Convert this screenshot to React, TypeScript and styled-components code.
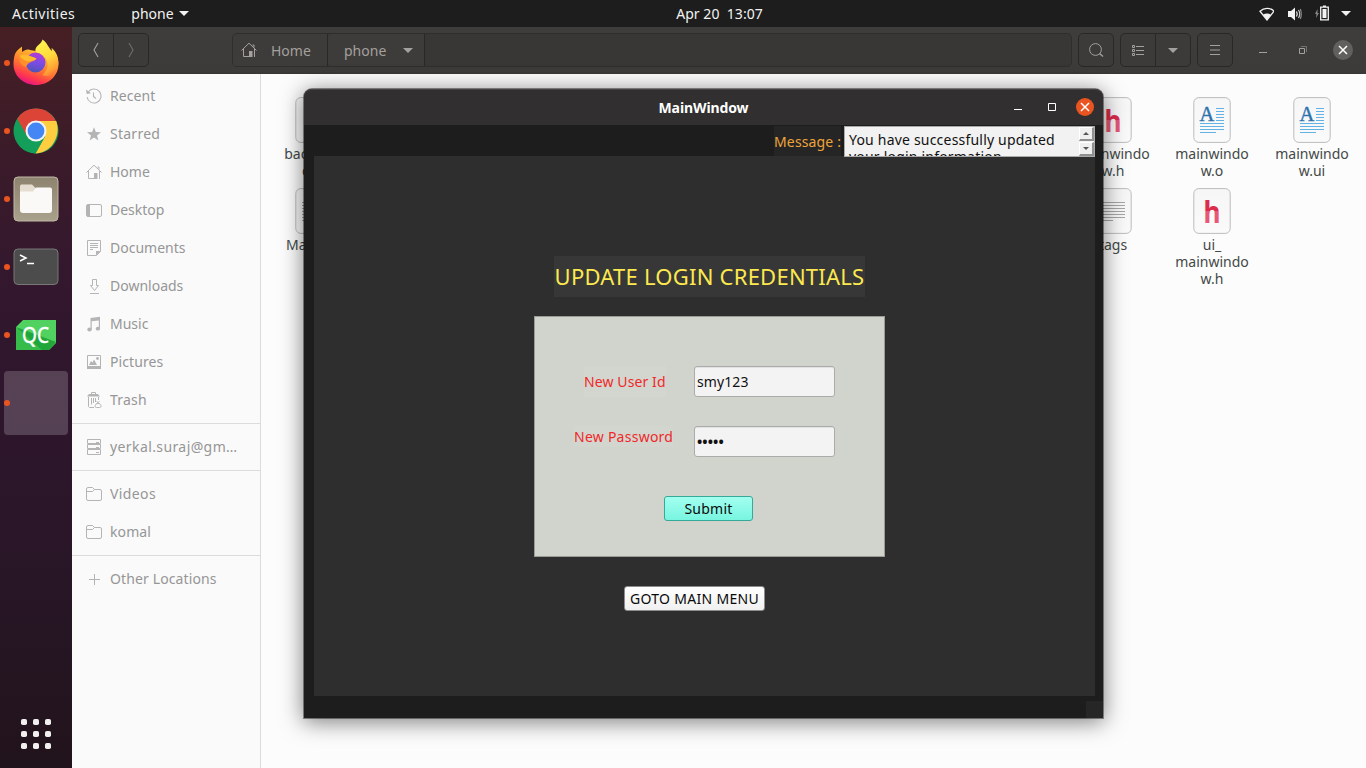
import React from "react";
import styled, { createGlobalStyle } from "styled-components";

const GlobalStyle = createGlobalStyle`
  * { box-sizing: border-box; }
  body {
    margin: 0;
    overflow: hidden;
    font-family: "Noto Sans", "Open Sans", sans-serif;
    font-size: 14px;
  }
  svg { display: block; flex: none; }
`;

const Desktop = styled.div`
  position: relative;
  width: 1366px;
  height: 768px;
  display: flex;
  flex-direction: column;
  overflow: hidden;
  background: #fcfcfc;
`;

const Text = styled.span<{ $track?: number }>`
  white-space: pre;
  letter-spacing: ${(p) => p.$track ?? 0}px;
`;

/* ---------- top bar ---------- */

const TopBar = styled.header`
  height: 27px;
  flex: none;
  display: grid;
  grid-template-columns: 1fr auto 1fr;
  align-items: center;
  background: #1d1d1d;
  color: #f2f2f2;
  line-height: 26px;
`;
const TopLeft = styled.div`
  display: flex;
  align-items: center;
  padding-left: 12px;
  gap: 56px;
`;
const AppMenu = styled.div`
  display: flex;
  align-items: center;
  gap: 5px;
`;
const Clock = styled.div`
  padding-left: 73px;
`;
const Tray = styled.div`
  display: flex;
  align-items: center;
  justify-content: flex-end;
  gap: 12px;
  padding-right: 15px;
`;

/* ---------- dock ---------- */

const Body = styled.div`
  flex: 1;
  display: flex;
  min-height: 0;
`;
const Dock = styled.nav`
  width: 72px;
  flex: none;
  display: flex;
  flex-direction: column;
  gap: 4px;
  padding: 4px 4px 2px;
  background: linear-gradient(#461f24 0%, #3b1b29 17%, #32172e 36%, #2d162c 55%, #251522 85%, #21131b 100%);
`;
const DockItem = styled.div<{ $active?: boolean }>`
  position: relative;
  width: 64px;
  height: 64px;
  display: flex;
  align-items: center;
  justify-content: center;
  border-radius: 4px;
  background: ${(p) => (p.$active ? "rgba(255,255,255,0.19)" : "transparent")};
`;
const RunningDot = styled.i`
  position: absolute;
  left: 0;
  top: 29px;
  width: 6px;
  height: 6px;
  border-radius: 50%;
  background: #e95420;
`;
const AppsGrid = styled.div`
  margin: auto auto 17px;
  display: grid;
  grid-template-columns: repeat(3, 6px);
  grid-auto-rows: 6px;
  gap: 6px;
`;
const AppsDot = styled.i`
  border-radius: 1.8px;
  background: #f2f0ef;
`;

/* ---------- file manager ---------- */

const FilesWindow = styled.main`
  flex: 1;
  display: flex;
  flex-direction: column;
`;
const HeaderBar = styled.div`
  height: 47px;
  flex: none;
  display: flex;
  align-items: center;
  gap: 6px;
  padding: 0 13px 1px 6px;
  background: linear-gradient(#3f3d3b, #3d3b39 95%, #383635);
  color: #a3a09d;
`;
const ButtonGroup = styled.div<{ $gap?: number }>`
  height: 34px;
  display: flex;
  margin-right: ${(p) => p.$gap ?? 0}px;
  border: 1px solid #292826;
  border-radius: 5px;
  background: #3d3b39;
`;
const HeaderButton = styled.div<{ $divided?: boolean }>`
  width: ${(p) => (p.$divided ? 35 : 34)}px;
  display: flex;
  align-items: center;
  justify-content: center;
  border-right: ${(p) => (p.$divided ? "1px solid #292826" : "0")};
`;
const PathBar = styled.div`
  flex: 1;
  height: 34px;
  display: flex;
  border: 1px solid #302e2d;
  border-radius: 5px;
  background: #393735;
`;
const PathSegment = styled.div<{ $width: number; $gap: number; $pad: number }>`
  width: ${(p) => p.$width}px;
  display: flex;
  align-items: center;
  gap: ${(p) => p.$gap}px;
  padding-left: ${(p) => p.$pad}px;
  border-right: 1px solid #292826;
  background: #3e3c3a;
  border-radius: 4px 0 0 4px;
`;
const WindowControls = styled.div`
  display: flex;
  align-items: center;
  gap: 20px;
  margin-left: 14px;
`;
const ControlSlot = styled.div`
  width: 20px;
  height: 20px;
  display: flex;
  align-items: center;
  justify-content: center;
`;
const RoundClose = styled(ControlSlot)<{ $color: string; $size: number }>`
  width: ${(p) => p.$size}px;
  height: ${(p) => p.$size}px;
  border-radius: 50%;
  background: ${(p) => p.$color};
`;
const FilesBody = styled.div`
  flex: 1;
  display: flex;
`;
const Sidebar = styled.aside`
  width: 189px;
  flex: none;
  padding-top: 3px;
  background: #fafafa;
  border-right: 1px solid #dcdcdc;
`;
const Place = styled.div`
  height: 38px;
  display: flex;
  align-items: center;
  gap: 8px;
  padding: 0 0 2px 14px;
  color: #969696;
  svg { margin-top: 2px; }
`;
const Separator = styled.div`
  height: 1px;
  margin: 4px 0;
  background: #dcdcdc;
`;
const FileGrid = styled.section`
  display: grid;
  grid-template-columns: 100px 99px repeat(6, 100px) 99px 100px 100px;
  grid-template-rows: 91px 110px;
  align-content: start;
  padding: 23px 0 0 3px;
`;
const FileCell = styled.div<{ $col: number; $row: number }>`
  grid-column: ${(p) => p.$col};
  grid-row: ${(p) => p.$row};
  width: 100px;
  display: flex;
  flex-direction: column;
  align-items: center;
`;
const FileName = styled.div`
  margin-top: 2px;
  line-height: 17px;
  text-align: center;
  white-space: pre;
  color: #444948;
`;

/* ---------- application window ---------- */

const AppWindow = styled.section`
  position: absolute;
  left: 304px;
  top: 89px;
  width: 799px;
  height: 629px;
  display: flex;
  flex-direction: column;
  border-radius: 8px 8px 0 0;
  background: #1d1d1d;
  box-shadow: 0 0 0 1px rgba(0, 0, 0, 0.4), 0 3px 22px 1px rgba(0, 0, 0, 0.5);
`;
const TitleBar = styled.div`
  height: 36px;
  flex: none;
  display: grid;
  grid-template-columns: 1fr auto 1fr;
  align-items: center;
  border-radius: 8px 8px 0 0;
  border-top: 1px solid #464444;
  padding-bottom: 1px;
  background: #322f30;
  color: #fff;
  font-weight: 700;
`;
const TitleControls = styled.div`
  grid-column: 3;
  display: flex;
  align-items: center;
  justify-content: flex-end;
  gap: 14px;
  padding-right: 9px;
`;
const TitleText = styled.div`
  grid-column: 2;
`;
const MessageRow = styled.div`
  height: 31px;
  flex: none;
  display: flex;
  justify-content: flex-end;
  gap: 3px;
  padding: 1px 8px 0 0;
`;
const MessageLabel = styled.label`
  width: 67px;
  line-height: 32px;
  height: 30px;
  background: #252525;
  color: #efa43a;
`;
const MessageBox = styled.div`
  width: 251px;
  height: 31px;
  position: relative;
  display: flex;
  justify-content: space-between;
  overflow: hidden;
  border: 1px solid #aaa;
  background: #f2f2f2;
  color: #111;
`;
const MessageText = styled.div`
  padding: 4px 0 0 4px;
  line-height: 17px;
`;
const ScrollButtons = styled.div`
  width: 15px;
  display: flex;
  flex-direction: column;
  gap: 1px;
`;
const ScrollButton = styled.div`
  height: 14px;
  display: flex;
  align-items: center;
  justify-content: center;
  background: #efefef;
  border: 1px solid #fff;
  border-right: 2px solid #909090;
  border-bottom: 2px solid #909090;
`;
const Canvas = styled.div`
  height: 540px;
  flex: none;
  margin: 0 8px 0 10px;
  padding-top: 100px;
  display: flex;
  flex-direction: column;
  align-items: flex-start;
  background: #2e2e2e;
`;
const Heading = styled.h1`
  width: 311px;
  height: 41px;
  margin: 0 0 19px 240px;
  font-size: 22px;
  font-weight: 400;
  line-height: 40px;
  text-align: center;
  background: #373737;
  color: #fce94f;
`;
const FormPanel = styled.form`
  width: 351px;
  height: 241px;
  margin-left: 220px;
  padding-top: 49px;
  border: 1px solid #9a9c96;
  background: #d1d4cc;
`;
const FieldRow = styled.div<{ $indent: number }>`
  display: flex;
  align-items: flex-start;
  justify-content: space-between;
  height: 31px;
  margin: 0 49px 29px ${(p) => p.$indent}px;
`;
const FieldLabel = styled.label<{ $height: number }>`
  height: ${(p) => p.$height}px;
  line-height: ${(p) => p.$height}px;
  background: #d3d5cf;
  color: #ef2929;
`;
const Field = styled.div<{ $masked?: boolean }>`
  width: 141px;
  height: 31px;
  padding-left: 2px;
  line-height: 30px;
  font-weight: ${(p) => (p.$masked ? 700 : 400)};
  border: 1px solid #abaca9;
  border-radius: 3px;
  background: #f3f3f3;
  box-shadow: inset 0 1px 0 #e2e2e2;
  color: #111;
`;
const PushButton = styled.button<{ $mint?: boolean; $width: number }>`
  display: block;
  width: ${(p) => p.$width}px;
  height: 25px;
  padding: 0;
  font: inherit;
  line-height: 23px;
  color: #0a0a0a;
  border: 1px solid ${(p) => (p.$mint ? "#36aa98" : "#8d8d8d")};
  border-radius: 3px;
  background: ${(p) =>
    p.$mint ? "linear-gradient(#a3fff0, #78f5e0)" : "linear-gradient(#fff, #f0f0f0)"};
`;
const SubmitRow = styled.div`
  margin: 39px 0 0 129px;
`;
const MenuRow = styled.div`
  margin: 29px 0 0 310px;
`;
const SizeGrip = styled.div`
  width: 17px;
  height: 17px;
  margin: 5px 0 0 auto;
  background: #262626;
`;

/* ---------- icons ---------- */

const Caret = ({ color, w = 10 }: { color: string; w?: number }) => (
  <svg width={w} height={w / 2} viewBox="0 0 10 5">
    <path d="M0 0h10L5 5z" fill={color} />
  </svg>
);

const HomeIcon = ({ color }: { color: string }) => (
  <svg width="16" height="16" viewBox="0 0 16 16" fill="none" stroke={color}>
    <path d="M.5 8.500 8 1.200l7.500 7.300M2.500 7v7.500H9M13.500 7v8M11.500 3h1.500v2.500" />
    <path d="M8 9h3.500v6H8z" fill={color} stroke="none" />
  </svg>
);

const FolderIcon = () => (
  <svg width="16" height="16" viewBox="0 0 16 16" fill="none" stroke="#b4b4b4">
    <path d="M.5 13v-10A1.500 1.500 0 0 1 2 1.500h4.500l2 2H14A1.500 1.500 0 0 1 15.500 5v8a1.500 1.500 0 0 1-1.500 1.500H2A1.500 1.500 0 0 1 .5 13zM.5 5.500h6l2-2" />
  </svg>
);

const placeIcons: Record<string, React.ReactNode> = {
  Recent: (
    <svg width="16" height="16" viewBox="0 0 16 16" fill="none" stroke="#b4b4b4" strokeWidth="1.100">
      <path d="M2.300 4a7 7 0 1 1-1.200 5M7.500 4.500v4l2.500 2" />
      <path d="M0 1.500 .7 6l4.300-.7z" fill="#b4b4b4" stroke="none" />
    </svg>
  ),
  Starred: (
    <svg width="16" height="16" viewBox="0 0 16 16">
      <path d="m8 1.300 1.800 4.700 5.200.2-4 3.200 1.400 5L8 11.600l-4.400 2.800 1.400-5-4-3.200 5.200-.2z" fill="#b4b4b4" />
    </svg>
  ),
  Home: <HomeIcon color="#b4b4b4" />,
  Desktop: (
    <svg width="16" height="16" viewBox="0 0 16 16">
      <rect x=".5" y="2.500" width="15" height="12" rx="1.500" fill="none" stroke="#b4b4b4" />
      <path d="M1 2.500h3v12H1z" fill="#b4b4b4" />
    </svg>
  ),
  Documents: (
    <svg width="16" height="16" viewBox="0 0 16 16" fill="none" stroke="#b4b4b4">
      <path d="M1.500.5h13v11l-4 4h-9zM4 3.500h8M4 5.500h8M4 7.500h8M4 9.500h3" />
      <path d="M10 11h4.500L10 15.500z" fill="#b4b4b4" stroke="none" />
    </svg>
  ),
  Downloads: (
    <svg width="16" height="16" viewBox="0 0 16 16" fill="none" stroke="#b4b4b4">
      <path d="M6.500 1.500h4v6h2l-4 5-4-5h2zM4 15.500h9" />
    </svg>
  ),
  Music: (
    <svg width="16" height="16" viewBox="0 0 16 16" fill="#b4b4b4">
      <path d="M4.500 2 14 .8v11.700h-1.200V4.500L5.700 5.200v8.300H4.500z" />
      <ellipse cx="3.500" cy="13.500" rx="2.200" ry="1.900" />
      <ellipse cx="11.900" cy="12.700" rx="2.200" ry="1.900" />
    </svg>
  ),
  Pictures: (
    <svg width="16" height="16" viewBox="0 0 16 16">
      <path d="M1.500 1.500h13v12h-13z" fill="none" stroke="#b4b4b4" />
      <path d="M1 12h14v3H1zM3 11l2-4 1.500 1.500L8 5.500 11 11z" fill="#b4b4b4" />
      <circle cx="11.500" cy="4.500" r="1.400" fill="#b4b4b4" />
    </svg>
  ),
  Trash: (
    <svg width="16" height="16" viewBox="0 0 16 16" fill="none" stroke="#b4b4b4">
      <path d="M5.500 2V.5h4V2M2.500 5v9.500l1 1H8M12.500 5v3M5.500 6v6.500M7.500 6v5M9.500 6v4" />
      <path d="M1 4.500 3 2h9l2 2.500z" fill="#b4b4b4" stroke="none" />
      <path d="M10.500 11.500h3l1.500 2c.4 1.300-.4 2-1.400 2h-3c-1.400 0-2-1-1.300-2zM10.500 9.500l1.500 1 1.500-1" />
    </svg>
  ),
  "yerkal.suraj@gm…": (
    <svg width="16" height="16" viewBox="0 0 16 16" fill="none" stroke="#b4b4b4">
      <path d="M1.500.5h13v4h-13zM1.500 5.500h13v4h-13zM1.500 10.500h13v5h-13zM10 3.500h3M10 8.500h3M10 13.500h3" />
    </svg>
  ),
  Videos: <FolderIcon />,
  komal: <FolderIcon />,
  "Other Locations": (
    <svg width="16" height="16" viewBox="0 0 16 16" stroke="#b4b4b4">
      <path d="M3 8.500h11M8.500 3v11" />
    </svg>
  ),
};

const Firefox = () => (
  <svg width="46" height="48" viewBox="0 1 46 48">
    <defs>
      <linearGradient id="ffBody" x1=".8" y1="0" x2=".3" y2="1">
        <stop offset="0" stopColor="#ffe94a" />
        <stop offset=".35" stopColor="#ffa52c" />
        <stop offset=".62" stopColor="#ff6b35" />
        <stop offset=".82" stopColor="#ff3550" />
        <stop offset="1" stopColor="#e3108c" />
      </linearGradient>
      <linearGradient id="ffGlobe" x1=".6" y1="0" x2=".4" y2="1">
        <stop offset="0" stopColor="#b43ad6" />
        <stop offset=".5" stopColor="#7c4be6" />
        <stop offset="1" stopColor="#4e55b4" />
      </linearGradient>
      <linearGradient id="ffFlame" x1=".3" y1="0" x2=".7" y2="1">
        <stop offset="0" stopColor="#fff44f" />
        <stop offset=".5" stopColor="#ffd83d" />
        <stop offset=".85" stopColor="#ff9f35" />
        <stop offset="1" stopColor="#ff7139" />
      </linearGradient>
    </defs>
    <path d="M2 16C3 13 6 11 9 8.500V14c3-2 5-3 8-2l6 1 12-3 5 4-1-4c5 5 6.500 10 6.500 15.500C45.500 38 35.500 47 23 47S.5 38 .5 26c0-4 .5-7 1.500-10z" fill="url(#ffBody)" />
    <path d="M29.500 1.500c4.500 3 6 8 9.500 12L38.500 10c6 6 8 13 6 20-2 7-9 10-15 7 5-4 7-11 3-17-4-4-11-4-10-9 1-4 6-5 7-9.500z" fill="url(#ffFlame)" />
    <circle cx="22.500" cy="24.500" r="10" fill="url(#ffGlobe)" />
    <path d="M6 19c3-4 8-3 11-1l6.500 2.300c-.5 2.700-4 2.700-6.500 4.200-2 1-3 2-4 4.500-4-1-7-5-7-10z" fill="#ff8f2a" />
    <path d="M6.500 18c3-2 7-2 10 0l6.500 2.300c-.5 2-3.500 2.200-6 3.200-4 0-8-2-10.500-5.500z" fill="#ffbb2d" />
  </svg>
);

const Chrome = () => (
  <svg width="46" height="46" viewBox="0 0 46 46">
    <circle cx="23" cy="23" r="22.500" fill="#139e59" />
    <path d="M23 23 4.200 11C8 4.500 15 .5 23 .5c8.500 0 15.500 4.500 19.500 12z" fill="#dc4437" />
    <path d="M23 13h20.200c5.500 15-5 32.500-20.700 32.500L32 28.500z" fill="#ffcd40" />
    <path d="m4.200 11 9.500 16.500L18 16z" fill="#dc4437" />
    <path d="M4.200 11C-3 24 5 44 22.500 45.500L32 28.500l-9 4-9.500-5z" fill="#139e59" />
    <circle cx="23" cy="23" r="10.500" fill="#f3f3f3" />
    <circle cx="23" cy="23" r="8.400" fill="#4486f4" />
  </svg>
);

const FilesApp = () => (
  <svg width="46" height="46" viewBox="0 0 46 46">
    <defs>
      <linearGradient id="tan" x1="0" y1="0" x2="0" y2="1">
        <stop offset="0" stopColor="#8d836f" />
        <stop offset="1" stopColor="#aaa18d" />
      </linearGradient>
    </defs>
    <rect x="1" y="1" width="44" height="44" rx="4" fill="url(#tan)" stroke="#c0b8a6" />
    <path d="M7 18v-7.500C7 9 8 8.500 9 8.500h10l4 4v8z" fill="#e5ddd0" />
    <path d="M7 15.500h13l3-4h14c1.500 0 2 1 2 2V34c0 2-1 3-3 3H10c-2 0-3-1-3-3z" fill="#faf9f8" />
  </svg>
);

const Terminal = () => (
  <svg width="46" height="38" viewBox="0 0 46 38">
    <rect x="1" y="1" width="44" height="35.500" rx="4" fill="#4c4c4c" stroke="#777" />
    <path d="m7 7 6 3-6 3M14 15.500h7" fill="none" stroke="#fff" strokeWidth="1.500" />
  </svg>
);

const QtCreator = () => (
  <svg width="40" height="30" viewBox="0 0 40 30">
    <path d="M7 0h33v23l-7 7H0V7z" fill="#50d160" />
    <path d="M0 7l40 15-7 8H20z" fill="#21a63c" />
    <path d="M0 7v23h26z" fill="#37bb4b" />
    <text x="6" y="23" fontSize="22" fill="#fff" stroke="#fff" strokeWidth=".4" textLength="27" lengthAdjust="spacingAndGlyphs">QC</text>
  </svg>
);

type FileKind = "h" | "doc" | "text" | "cpp";

const FileIcon = ({ kind }: { kind: FileKind }) => (
  <svg width="38" height="46" viewBox="0 0 38 46">
    <defs>
      <linearGradient id="paper" x1="0" y1="0" x2="0" y2="1">
        <stop offset="0" stopColor="#f6f6f6" />
        <stop offset="1" stopColor="#fafafa" />
      </linearGradient>
      <linearGradient id="crimson" gradientUnits="userSpaceOnUse" x1="0" y1="12" x2="0" y2="36">
        <stop offset=".47" stopColor="#dc2b4c" />
        <stop offset=".47" stopColor="#e65775" />
      </linearGradient>
    </defs>
    <rect x=".8" y=".6" width="36.400" height="44.800" rx="5" fill="url(#paper)" stroke="#bcbcbc" />
    {kind === "h" && (
      <text x="10.500" y="35" fontSize="30" fontWeight="700" fill="url(#crimson)" textLength="17" lengthAdjust="spacingAndGlyphs">h</text>
    )}
    {kind === "cpp" && (
      <text x="8.500" y="28" fontSize="19" fontWeight="700" fill="#2a9d96">C</text>
    )}
    {kind === "doc" && (
      <>
        <text x="6.500" y="23.500" fontSize="20.500" fontFamily="Liberation Serif, serif" fill="#2c72ad" stroke="#2c72ad" strokeWidth=".4">A</text>
        <path d="M23 11.500h8M23 14.500h8M23 17.500h8M23 20.500h8M23 23.500h8M7 26.500h24M7 29.500h24M7 32.500h24M7 35.500h16" stroke="#62b2e4" />
      </>
    )}
    {kind === "text" && (
      <path d="M7 14.500h24M7 17.500h24M7 20.500h24M7 23.500h24M7 26.500h24M7 29.500h24M7 32.500h12" stroke="#a6a6a6" />
    )}
  </svg>
);

const CloseGlyph = () => (
  <svg width="10" height="10" viewBox="0 0 10 10">
    <path d="m1 1 8 8M9 1 1 9" stroke="#fff" strokeWidth="1.500" />
  </svg>
);

/* ---------- data ---------- */

const placeGroups: { name: string; track?: number }[][] = [
  [
    { name: "Recent", track: 0.1 },
    { name: "Starred", track: 0.25 },
    { name: "Home" },
    { name: "Desktop" },
    { name: "Documents" },
    { name: "Downloads" },
    { name: "Music" },
    { name: "Pictures", track: 0.1 },
    { name: "Trash", track: 0.2 },
  ],
  [{ name: "yerkal.suraj@gm…", track: 0.4 }],
  [{ name: "Videos", track: 0.4 }, { name: "komal", track: 0.1 }],
  [{ name: "Other Locations", track: 0.12 }],
];

const files: { name: string; kind: FileKind; col: number; row: number }[] = [
  { name: "backend.\ncpp", kind: "cpp", col: 1, row: 1 },
  { name: "mainwindo\nw.h", kind: "h", col: 9, row: 1 },
  { name: "mainwindo\nw.o", kind: "doc", col: 10, row: 1 },
  { name: "mainwindo\nw.ui", kind: "doc", col: 11, row: 1 },
  { name: "Makefile", kind: "text", col: 1, row: 2 },
  { name: "tags", kind: "text", col: 9, row: 2 },
  { name: "ui_\nmainwindo\nw.h", kind: "h", col: 10, row: 2 },
];

const dockApps = [Firefox, Chrome, FilesApp, Terminal, QtCreator];

export default function App() {
  return (
    <>
      <GlobalStyle />
      <Desktop>
        <TopBar>
          <TopLeft>
            <Text $track={0.5}>Activities</Text>
            <AppMenu>
              <Text>phone</Text>
              <Caret color="#f2f2f2" />
            </AppMenu>
          </TopLeft>
          <Clock>
            <Text $track={0.05}>Apr 20  13:07</Text>
          </Clock>
          <Tray>
            <svg width="16" height="14" viewBox="-1 0 16 14">
              <path d="M1 4.200c4-3.800 10-3.800 14 0L8 13z" fill="none" stroke="#f2f2f2" strokeWidth="1.300" />
              <path d="M4 7.800c2.500-1.800 5.500-1.800 8 0L8 13z" fill="#f2f2f2" />
            </svg>
            <svg width="16" height="14" viewBox="-1 0 16 14" fill="none" stroke="#f2f2f2" strokeWidth="1.200">
              <path d="M1 4h3l4-3.500v13L4 10H1z" fill="#f2f2f2" stroke="none" />
              <path d="M9.500 4.500q1.500 2.500 0 5" />
              <path d="M11.500 3q2.500 4 0 8" stroke="#ccc" />
              <path d="M13.300 2q2 5 0 10" stroke="#888" />
            </svg>
            <svg width="15" height="18" viewBox="-1 1 15 18">
              <path d="M2.500 5 0 10h1.500L1 14l3-5H2.500z" fill="#888" />
              <path d="M5.700 3.200h7.600v12.600H5.700z" fill="none" stroke="#f2f2f2" strokeWidth="1.300" />
              <path d="M7.500 5h4v9h-4zM8 1.500h3V3H8z" fill="#f2f2f2" />
            </svg>
            <Caret color="#f2f2f2" />
          </Tray>
        </TopBar>

        <Body>
          <Dock>
            {dockApps.map((Icon, i) => (
              <DockItem key={i}>
                <RunningDot />
                <Icon />
              </DockItem>
            ))}
            <DockItem $active>
              <RunningDot />
            </DockItem>
            <AppsGrid>
              {Array.from({ length: 9 }, (_, i) => (
                <AppsDot key={i} />
              ))}
            </AppsGrid>
          </Dock>

          <FilesWindow>
            <HeaderBar>
              <ButtonGroup $gap={77}>
                <HeaderButton $divided>
                  <svg width="8" height="16" viewBox="0 0 8 16" fill="none" stroke="#a3a09d" strokeWidth="1.100">
                    <path d="M6 1 2 8l4 7" />
                  </svg>
                </HeaderButton>
                <HeaderButton>
                  <svg width="8" height="16" viewBox="0 0 8 16" fill="none" stroke="#6f6d6b" strokeWidth="1.100">
                    <path d="m2 1 4 7-4 7" />
                  </svg>
                </HeaderButton>
              </ButtonGroup>
              <PathBar>
                <PathSegment $width={95} $gap={14} $pad={8}>
                  <HomeIcon color="#a3a09d" />
                  <Text>Home</Text>
                </PathSegment>
                <PathSegment $width={97} $gap={17} $pad={16}>
                  <Text>phone</Text>
                  <Caret color="#a3a09d" />
                </PathSegment>
              </PathBar>
              <ButtonGroup>
                <HeaderButton>
                  <svg width="16" height="16" viewBox="0 0 16 16" fill="none" stroke="#a3a09d">
                    <circle cx="7.500" cy="7.500" r="5.900" />
                    <path d="m11.500 11.500 3.500 3" strokeWidth="1.500" />
                  </svg>
                </HeaderButton>
              </ButtonGroup>
              <ButtonGroup>
                <HeaderButton $divided>
                  <svg width="14" height="14" viewBox="1 0 14 14" fill="none" stroke="#a3a09d">
                    <path d="M2.500 2.500h2v2h-2zM2.500 6.500h2v2h-2zM2.500 10.500h2v2h-2zM6 3.500h8M6 7.500h8M6 11.500h8" />
                  </svg>
                </HeaderButton>
                <HeaderButton>
                  <Caret color="#a3a09d" />
                </HeaderButton>
              </ButtonGroup>
              <ButtonGroup>
                <HeaderButton>
                  <svg width="12" height="12" viewBox="0 0 12 12" stroke="#a3a09d">
                    <path d="M1 1.500h10M1 6h10M1 10.500h10" />
                  </svg>
                </HeaderButton>
              </ButtonGroup>
              <WindowControls>
                <ControlSlot>
                  <svg width="10" height="8" viewBox="0 0 10 8" stroke="#a3a09d">
                    <path d="M1 6.500h8" />
                  </svg>
                </ControlSlot>
                <ControlSlot>
                  <svg width="8" height="8" viewBox="0 0 8 8" fill="none">
                    <path d="M.5 2.500h5v5h-5z" stroke="#a3a09d" />
                    <path d="M2 .5h5.500V6" stroke="#74716f" />
                  </svg>
                </ControlSlot>
                <RoundClose $color="#62605e" $size={20}>
                  <CloseGlyph />
                </RoundClose>
              </WindowControls>
            </HeaderBar>
            <FilesBody>
              <Sidebar>
                {placeGroups.map((group, i) => (
                  <React.Fragment key={i}>
                    {i > 0 && <Separator />}
                    {group.map(({ name, track }) => (
                      <Place key={name}>
                        {placeIcons[name]}
                        <Text $track={track}>{name}</Text>
                      </Place>
                    ))}
                  </React.Fragment>
                ))}
              </Sidebar>
              <FileGrid>
                {files.map((f) => (
                  <FileCell key={f.name + f.kind} $col={f.col} $row={f.row}>
                    <FileIcon kind={f.kind} />
                    <FileName>{f.name}</FileName>
                  </FileCell>
                ))}
              </FileGrid>
            </FilesBody>
          </FilesWindow>
        </Body>

        <AppWindow>
          <TitleBar>
            <TitleText>
              <Text $track={-0.1}>MainWindow</Text>
            </TitleText>
            <TitleControls>
              <ControlSlot>
                <svg width="8" height="8" viewBox="0 0 8 8" stroke="#fff">
                  <path d="M0 6.500h8" />
                </svg>
              </ControlSlot>
              <ControlSlot>
                <svg width="8" height="8" viewBox="0 0 8 8" fill="none" stroke="#fff">
                  <path d="M.5.5h7v7h-7z" />
                </svg>
              </ControlSlot>
              <RoundClose $color="#e95420" $size={18}>
                <CloseGlyph />
              </RoundClose>
            </TitleControls>
          </TitleBar>
          <MessageRow>
            <MessageLabel>
              <Text $track={0.15}>Message :</Text>
            </MessageLabel>
            <MessageBox>
              <MessageText>
                <Text $track={0.2}>{"You have successfully updated\nyour login information."}</Text>
              </MessageText>
              <ScrollButtons>
                <ScrollButton>
                  <svg width="6" height="3" viewBox="0 0 6 3">
                    <path d="M0 3h6L3 0z" fill="#555" />
                  </svg>
                </ScrollButton>
                <ScrollButton>
                  <svg width="6" height="3" viewBox="0 0 6 3">
                    <path d="M0 0h6L3 3z" fill="#555" />
                  </svg>
                </ScrollButton>
              </ScrollButtons>
            </MessageBox>
          </MessageRow>
          <Canvas>
            <Heading>
              <Text $track={0.24}>UPDATE LOGIN CREDENTIALS</Text>
            </Heading>
            <FormPanel>
              <FieldRow $indent={49}>
                <FieldLabel $height={31}>
                  <Text $track={0.1}>New User Id</Text>
                </FieldLabel>
                <Field>
                  <Text $track={0.1}>smy123</Text>
                </Field>
              </FieldRow>
              <FieldRow $indent={39}>
                <FieldLabel $height={21}>
                  <Text $track={0.25}>New Password</Text>
                </FieldLabel>
                <Field $masked>
                  <Text $track={0.1}>•••••</Text>
                </Field>
              </FieldRow>
              <SubmitRow>
                <PushButton type="button" $mint $width={89}>
                  <Text $track={0.25}>Submit</Text>
                </PushButton>
              </SubmitRow>
            </FormPanel>
            <MenuRow>
              <PushButton type="button" $width={141}>
                <Text $track={0.3}>GOTO MAIN MENU</Text>
              </PushButton>
            </MenuRow>
          </Canvas>
          <SizeGrip />
        </AppWindow>
      </Desktop>
    </>
  );
}
